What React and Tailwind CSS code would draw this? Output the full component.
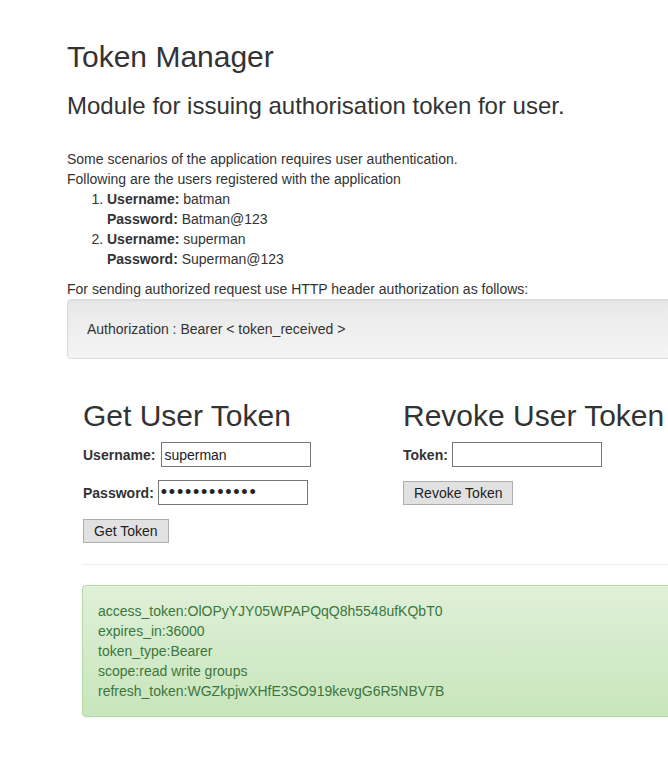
import React from "react";

const users = [
  { username: "batman", password: "Batman@123" },
  { username: "superman", password: "Superman@123" },
];

const tokenLines = [
  "access_token:OlOPyYJY05WPAPQqQ8h5548ufKQbT0",
  "expires_in:36000",
  "token_type:Bearer",
  "scope:read write groups",
  "refresh_token:WGZkpjwXHfE3SO919kevgG6R5NBV7B",
];

const inputCls =
  "w-[150px] h-[25px] border border-[#767676] bg-white px-[2px] text-[14px] text-[#222] outline-none";
const btnCls =
  "h-[24px] px-[10px] border border-[#adadad] bg-[#e1e1e1] text-[14px] leading-none text-[#222]";

export default function App() {
  return (
    <div className="w-full min-h-screen overflow-hidden bg-white">
      <div className="w-[1000px] pl-[67px] pt-[40px] font-['Liberation_Sans',Arial,sans-serif] text-[14px] leading-[20px] text-[#333]">
        <h1 className="text-[30px] leading-[33px] font-normal">Token Manager</h1>
        <h3 className="mt-[20px] text-[24px] leading-[26.4px] font-normal">
          Module for issuing authorisation token for user.
        </h3>

        <p className="mt-[30px]">
          Some scenarios of the application requires user authentication.
          <br />
          Following are the users registered with the application
        </p>
        <ol className="list-decimal pl-[40px] mb-[10px]">
          {users.map((u) => (
            <li key={u.username}>
              <b>Username:</b> {u.username}
              <br />
              <b>Password:</b> {u.password}
            </li>
          ))}
        </ol>
        <p>For sending authorized request use HTTP header authorization as follows:</p>

        {/* well */}
        <div className="w-[860px] mb-[20px] p-[19px] border border-[#dcdcdc] rounded-[4px] bg-linear-to-b from-[#e8e8e8] to-[#f5f5f5] shadow-[inset_0_1px_3px_rgba(0,0,0,0.05)]">
          Authorization : Bearer &lt; token_received &gt;
        </div>

        <div className="pl-[15px] pt-[20px]">
          <div className="flex pl-[1px]">
            {/* get token */}
            <div className="w-[320px]">
              <h2 className="text-[30px] leading-[33px] font-normal mb-[10px]">Get User Token</h2>
              <div className="flex items-center">
                <label className="font-bold mr-[6px]">Username:</label>
                <input type="text" className={inputCls} defaultValue="superman" />
              </div>
              <div className="flex items-center mt-[13px]">
                <label className="font-bold mr-[4px]">Password:</label>
                <input
                  type="password"
                  className={inputCls + " text-[18px] tracking-[1.75px]"}
                  defaultValue="Superman@123"
                />
              </div>
              <button className={btnCls + " mt-[14px]"}>Get Token</button>
            </div>

            {/* revoke token */}
            <div className="w-[320px]">
              <h2 className="text-[30px] leading-[33px] font-normal mb-[10px] whitespace-nowrap">
                Revoke User Token
              </h2>
              <div className="flex items-center">
                <label className="font-bold mr-[4px]">Token:</label>
                <input type="text" className={inputCls} defaultValue="" />
              </div>
              <button className={btnCls + " mt-[14px]"}>Revoke Token</button>
            </div>
          </div>

          <hr className="mt-[21px] mb-[20px] border-0 border-t border-[#eee] w-[845px]" />

          {/* token response */}
          <div className="w-[845px] p-[15px] border border-[#b2dba1] rounded-[4px] bg-linear-to-b from-[#dff0d8] to-[#c8e5bc] text-[#3c763d] shadow-[inset_0_1px_0_rgba(255,255,255,0.25),0_1px_2px_rgba(0,0,0,0.05)]">
            {tokenLines.map((line) => (
              <div key={line}>{line}</div>
            ))}
          </div>
        </div>
      </div>
    </div>
  );
}
